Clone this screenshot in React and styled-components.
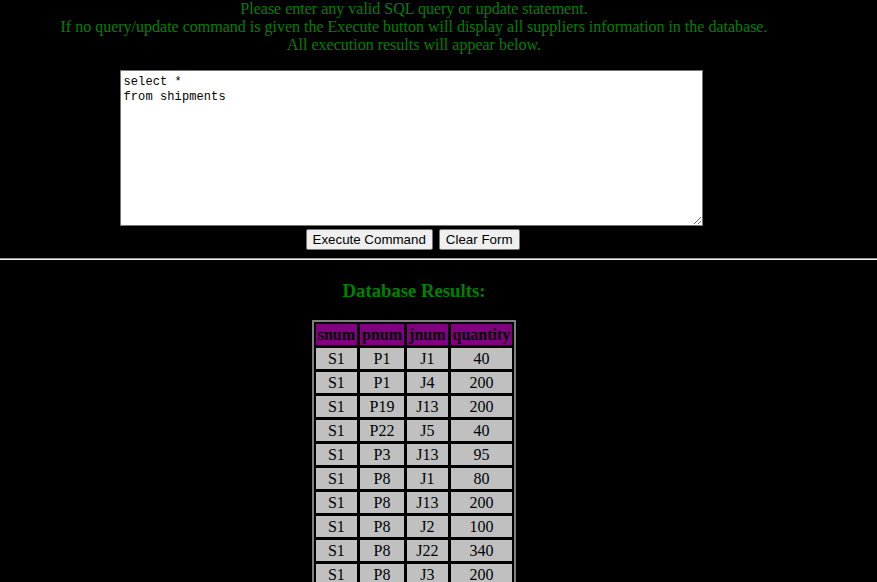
import React from "react";
import styled, { createGlobalStyle } from "styled-components";

const GlobalStyle = createGlobalStyle`
  html, body {
    margin: 0;
    padding: 0;
    background: #000;
  }
  body {
    font-family: "Liberation Serif", "Times New Roman", serif;
    font-size: 16px;
    color: #008000;
  }
`;

const rows = [
  ["S1", "P1", "J1", "40"],
  ["S1", "P1", "J4", "200"],
  ["S1", "P19", "J13", "200"],
  ["S1", "P22", "J5", "40"],
  ["S1", "P3", "J13", "95"],
  ["S1", "P8", "J1", "80"],
  ["S1", "P8", "J13", "200"],
  ["S1", "P8", "J2", "100"],
  ["S1", "P8", "J22", "340"],
  ["S1", "P8", "J3", "200"],
];

const Page = styled.div`
  width: 100%;
  background: #000;
  min-height: 582px;
`;

const Column = styled.div`
  width: 828px;
  text-align: center;
`;

const Intro = styled.div`
  line-height: 18px;
  color: #008000;
`;

const QueryForm = styled.form`
  margin: 16px 0 0;
  display: flex;
  flex-direction: column;
  align-items: center;
`;

const QueryBox = styled.textarea`
  box-sizing: border-box;
  width: 583px;
  height: 156px;
  margin: 0 0 0 -6px;
  padding: 4px 2px 2px 3px;
  border: 1px solid #767676;
  background: #fff;
  color: #000;
  font-family: "Liberation Mono", "Courier New", monospace;
  font-size: 12px;
  line-height: 15px;
  letter-spacing: 0.1px;
  resize: both;
`;

const ButtonRow = styled.div`
  display: flex;
  gap: 6px;
  margin: 3px 0 0 -3px;
`;

const Button = styled.button`
  height: 21px;
  padding: 1px 6px;
  border: 1px solid #767676;
  border-radius: 2px;
  background: #efefef;
  color: #000;
  font-family: "Liberation Sans", Arial, sans-serif;
  font-size: 13.33px;
  line-height: 17px;
`;

const Rule = styled.hr`
  margin: 8px 0 0;
  height: 0;
  border: 0;
  border-top: 1px solid #9a9a9a;
  border-bottom: 1px solid #f0f0f0;
`;

const Heading = styled.h3`
  margin: 20px 0 0;
  font-size: 18.72px;
  line-height: 22px;
  font-weight: bold;
  color: #008000;
`;

const Results = styled.table`
  margin: 18px auto 0;
  border: 2px solid #7f7f7f;
  border-spacing: 1px;
  background: #000;
`;

const HeadCell = styled.th`
  padding: 1px 2px;
  border: 1px solid #000;
  background: #800080;
  color: #000;
  font-weight: bold;
  line-height: 19px;
`;

const Cell = styled.td`
  padding: 1px 2px;
  border: 1px solid #000;
  background: #c0c0c0;
  color: #000;
  text-align: center;
  line-height: 19px;
`;

export default function App() {
  return (
    <>
      <GlobalStyle />
      <Page>
        <Column>
          <Intro>
            Please enter any valid SQL query or update statement.
            <br />
            If no query/update command is given the Execute button will display
            all suppliers information in the database.
            <br />
            All execution results will appear below.
          </Intro>
          <QueryForm onSubmit={(e) => e.preventDefault()}>
            <QueryBox defaultValue={"select *\nfrom shipments"} />
            <ButtonRow>
              <Button type="submit">Execute Command</Button>
              <Button type="reset">Clear Form</Button>
            </ButtonRow>
          </QueryForm>
        </Column>
        <Rule />
        <Column>
          <Heading>Database Results:</Heading>
          <Results>
            <thead>
              <tr>
                <HeadCell>snum</HeadCell>
                <HeadCell>pnum</HeadCell>
                <HeadCell>jnum</HeadCell>
                <HeadCell>quantity</HeadCell>
              </tr>
            </thead>
            <tbody>
              {rows.map((r, i) => (
                <tr key={i}>
                  {r.map((v, j) => (
                    <Cell key={j}>{v}</Cell>
                  ))}
                </tr>
              ))}
            </tbody>
          </Results>
        </Column>
      </Page>
    </>
  );
}
